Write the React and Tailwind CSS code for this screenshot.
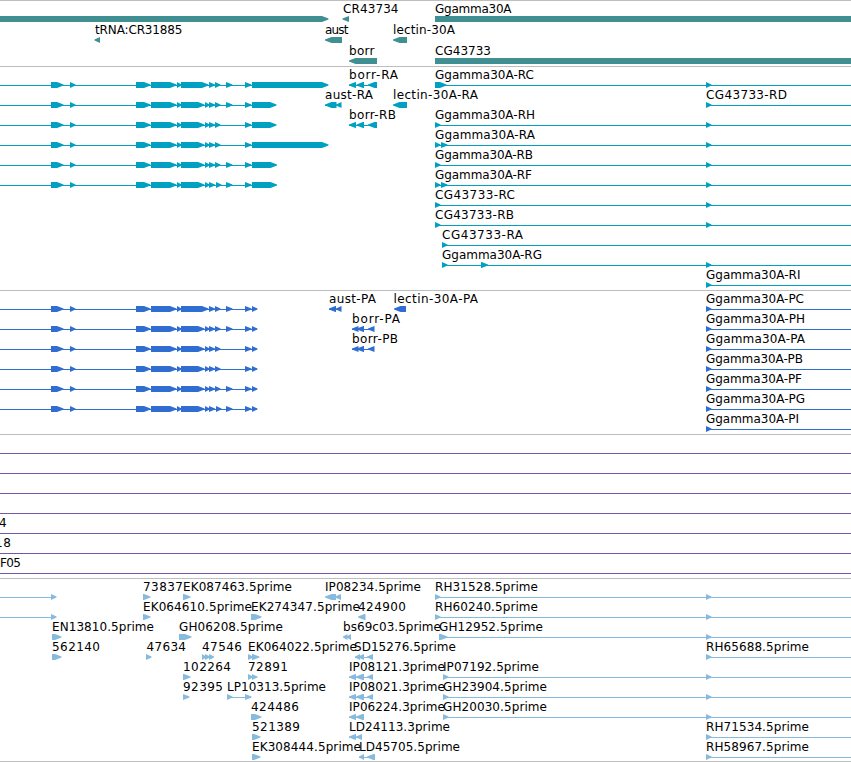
import React from "react";

const ROW_COLORS = {
  gene: "#3f8f93",
  transcript: "#00a0c2",
  protein: "#2f6dd0",
  est: "#87bbde",
  clone: "#7358a8",
};

// labels: [text, x, end]   exons: [x, end] (end < x points left)   lines: [x, end]
const f = (labels, exons, lines = []) => ({ labels, exons, lines });

const head = [[51, 63.5], [70, 75.5], [136, 150.5], [151, 176.5], [177, 181.5]];
const variants = [
  [[181, 208.5], [209, 215], [215, 220.5], [226, 232.5], [245, 251.5]],
  [[181, 204.5], [205, 209.5], [209, 215], [215, 220.5], [226, 232.5], [245, 251.5]],
  [[181, 204.5], [205, 209.5], [209, 215], [215, 220.5], [245, 251.5]],
  [[181, 204.5], [205, 209.5], [209, 215], [215, 220.5], [245, 251.5]],
  [[181, 204.5], [205, 209.5], [209, 215], [215, 220.5], [226, 232.5], [245, 251.5]],
  [[181, 204.5], [205, 209.5], [209, 215], [216, 221.5], [226, 232.5], [245, 251.5]],
];
const left = (i, end) => [...head, ...variants[i], [252, end]];
const L = [0, 252];
const A = [706, 711.5];
const S = [435, 440.5];
const W = [435, 851];
const R = [706, 851];
const borr = [[356, 349], [364, 356.5], [377, 368]];
const borrP = [[358.5, 352], [364, 357], [374.5, 368]];
const ip = [[356, 349], [364, 356], [373, 367]];

const genes = [
  f([["CR43734", 343, 398.5], ["Ggamma30A", 435, 511.5]], [[0, 328.5], [349, 342.5], [435, 870]]),
  f([["tRNA:CR31885", 95, 182.5], ["aust", 325, 348.5], ["lectin-30A", 393, 455]], [[100, 94.5], [342, 325], [407, 393]]),
  f([["borr", 349, 374.5], ["CG43733", 435, 491]], [[377, 349], [435, 870]]),
];

const transcripts = [
  f([["borr-RA", 349, 398], ["Ggamma30A-RC", 435, 534]], [...left(0, 328.5), ...borr, [435, 446.5], A], [L, [349, 377], W]),
  f([["aust-RA", 325, 373], ["lectin-30A-RA", 393, 478], ["CG43733-RD", 706, 787]], [...left(1, 276.5), [336.5, 325], [341.5, 336], [407, 393], A], [L, [325, 341], R]),
  f([["borr-RB", 349, 396], ["Ggamma30A-RH", 435, 535]], [...left(2, 276.5), ...borr, S, A], [L, [349, 377], W]),
  f([["Ggamma30A-RA", 435, 535]], [...left(3, 328.5), S, [441, 447.5], A], [L, W]),
  f([["Ggamma30A-RB", 435, 533]], [...left(4, 277), S, A], [L, W]),
  f([["Ggamma30A-RF", 435, 532]], [...left(5, 277), S, [441, 447.5], A], [L, W]),
  f([["CG43733-RC", 435, 515]], [S, A], [W]),
  f([["CG43733-RB", 435, 514]], [S, A], [W]),
  f([["CG43733-RA", 442, 523]], [[442, 447.5]], [[442, 851]]),
  f([["Ggamma30A-RG", 442, 542]], [[442, 447.5], [481, 488], A], [[442, 851]]),
  f([["Ggamma30A-RI", 706, 800.5]], [A], [R]),
];

const proteins = [
  f([["aust-PA", 329, 376], ["lectin-30A-PA", 393.5, 478], ["Ggamma30A-PC", 706, 804]], [...left(0, 257.5), [336, 329], [341.5, 336], [406, 394], A], [L, [329, 341], R]),
  f([["borr-PA", 352, 400], ["Ggamma30A-PH", 706, 805]], [...left(1, 257.5), ...borrP, A], [L, [352, 374], R]),
  f([["borr-PB", 352, 398], ["Ggamma30A-PA", 706, 805]], [...left(2, 257.5), ...borrP, A], [L, [352, 374], R]),
  f([["Ggamma30A-PB", 706, 803]], [...left(3, 257.5), A], [L, R]),
  f([["Ggamma30A-PF", 706, 802]], [...left(4, 257.5), A], [L, R]),
  f([["Ggamma30A-PG", 706, 805]], [...left(5, 257.5), A], [L, R]),
  f([["Ggamma30A-PI", 706, 799]], [A], [R]),
];

const full = [[0, 851]];
const clones = [
  f([], [], full),
  f([], [], full),
  f([], [], full),
  f([], [], full),
  f([["4", -1, 7]], [], full),
  f([["18", -5, 11]], [], full),
  f([["F05", 0, 21]], [], full),
];

const ests = [
  f([["73837", 143, 183], ["EK087463.5prime", 183, 292], ["IP08234.5prime", 325, 421], ["RH31528.5prime", 435, 538]],
    [[51, 56.5], [143, 150.5], [183, 190.5], [336, 325], [341, 335], S, A], [[0, 51], W]),
  f([["EK064610.5prime", 143, 252], ["EK274347.5prime", 251, 360], ["424900", 358, 406], ["RH60240.5prime", 435, 538]],
    [[51, 56.5], [143, 150.5], [251, 261.5], [365.5, 358], S, A], [[0, 51], W]),
  f([["EN13810.5prime", 52, 154], ["GH06208.5prime", 179, 283], ["bs69c03.5prime", 343, 441], ["GH12952.5prime", 439, 543]],
    [[52, 61.5], [179, 191.5], [347.5, 343], [351, 346.5], [439, 447.5], A], [[439, 851]]),
  f([["562140", 52, 100], ["47634", 146.5, 186], ["47546", 202, 242], ["EK064022.5prime", 248, 357], ["SD15276.5prime", 354, 456], ["RH65688.5prime", 706, 809]],
    [[52, 61.5], [146, 151.5], [202, 206], [205, 210], [209, 214], [248, 253], [252, 259.5], [360, 355], [364, 358], [373, 367], A], [[355, 373], R]),
  f([["102264", 183, 231], ["72891", 248, 288], ["IP08121.3prime", 349, 445], ["IP07192.5prime", 443, 539]],
    [[183, 190.5], [248, 253], [252, 257.5], ...ip, [443, 448.5], A], [[349, 373], [443, 851]]),
  f([["92395", 183, 223], ["LP10313.5prime", 227, 326], ["IP08021.3prime", 349, 445], ["GH23904.5prime", 443, 547]],
    [[183, 189.5], [227, 232.5], [245, 251.5], ...ip, [443, 448.5], A], [[227, 251], [349, 373], [443, 851]]),
  f([["424486", 251, 299], ["IP06224.3prime", 349, 445], ["GH20030.5prime", 443, 547]],
    [[251, 261.5], [356, 349], [364, 356], [443, 448.5], A], [[349, 364], [443, 851]]),
  f([["521389", 252, 300], ["LD24113.3prime", 349, 450], ["RH71534.5prime", 706, 809]],
    [[252, 260.5], [356, 349], [362, 356], A], [[349, 362], R]),
  f([["EK308444.5prime", 252, 361], ["LD45705.5prime", 359, 460], ["RH58967.5prime", 706, 809]],
    [[252, 260.5], [364, 359], [375, 367], A], [[359, 375], R]),
];

function Exon({ x, end }) {
  const dir = end > x ? 1 : -1;
  const tip = Math.min(Math.abs(end - x), 6.5);
  const neck = end - dir * tip;
  return <polygon points={`${x},13 ${neck},13 ${end},15.6 ${end},16.4 ${neck},19 ${x},19`} />;
}

function Row({ row, color, height }) {
  return (
    <svg width="851" height={height} viewBox={`0 0 851 ${height}`} className="block overflow-visible" fill={color}>
      {row.lines.map(([a, b], i) => (
        <rect key={i} x={a} y="16" width={b - a} height="1" />
      ))}
      {row.exons.map(([a, b], i) => (
        <Exon key={i} x={a} end={b} />
      ))}
      {row.labels.map(([text, a, b]) => (
        <text key={text} x={a} y="10" textLength={b - a} fill="#000" className="text-[12px]">
          {text}
        </text>
      ))}
    </svg>
  );
}

function Track({ rows, color, rowHeight = 20, className }) {
  return (
    <section className={`border-t border-[#bebebe] pt-0.5 ${className}`}>
      {rows.map((row, i) => (
        <Row key={i} row={row} color={color} height={rowHeight} />
      ))}
    </section>
  );
}

export default function App() {
  return (
    <main className="h-[762px] w-[851px] overflow-hidden bg-white font-['DejaVu_Sans','Noto_Sans',sans-serif]">
      <Track rows={genes} color={ROW_COLORS.gene} rowHeight={21} className="h-[66px]" />
      <Track rows={transcripts} color={ROW_COLORS.transcript} className="h-[224px]" />
      <Track rows={proteins} color={ROW_COLORS.protein} className="h-[144px]" />
      <Track rows={clones} color={ROW_COLORS.clone} className="h-[144px]" />
      <Track rows={ests} color={ROW_COLORS.est} className="h-[184px] border-b" />
    </main>
  );
}
